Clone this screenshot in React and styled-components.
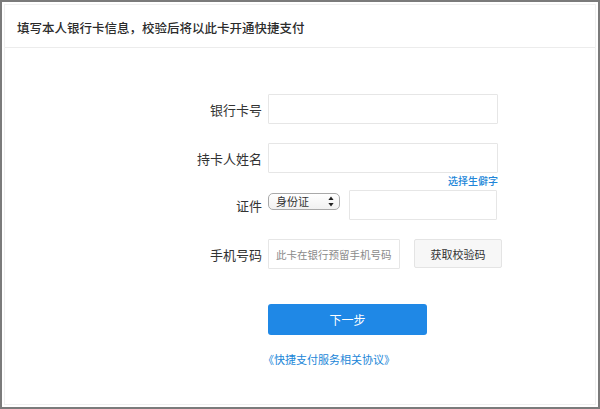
import styled, { createGlobalStyle } from "styled-components";

const GlobalStyle = createGlobalStyle`
  html, body {
    margin: 0;
    padding: 0;
    background: #ffffff;
  }
  * {
    box-sizing: border-box;
  }
`;

const FONT = `"Noto Sans CJK SC", "Noto Sans", sans-serif`;
const BLUE = "#2186d8";

const Frame = styled.div`
  width: 600px;
  height: 409px;
  border: 2px solid #7b7b7b;
  padding: 2px;
  background: #fff;
  font-family: ${FONT};
  color: #333;
`;

const Panel = styled.div`
  height: 100%;
  border: 1px solid #f0f0f0;
  display: flex;
  flex-direction: column;
`;

const Header = styled.div`
  height: 43px;
  border-bottom: 1px solid #ececec;
  display: flex;
  align-items: center;
  padding: 2px 12px 0;
  font-size: 12.5px;
  font-weight: 500;
  color: #2b2b2b;
`;

const Form = styled.div`
  display: grid;
  grid-template-columns: 90px 240px;
  column-gap: 6px;
  align-items: center;
  margin-left: 167px;
  padding-top: 46px;
`;

const Label = styled.div`
  text-align: right;
  font-size: 13px;
  color: #333;
  margin-top: ${({ $top }) => $top || 0}px;
`;

const Field = styled.div`
  display: flex;
  align-items: flex-start;
  margin-top: ${({ $top }) => $top || 0}px;
`;

const Input = styled.input`
  display: block;
  flex-shrink: 0;
  width: ${({ $w }) => $w || 230}px;
  height: 30px;
  border: 1px solid #e6e6e6;
  border-radius: 1px;
  background: #fff;
  padding: 0 2px 0 7px;
  font-family: ${FONT};
  font-size: 10.5px;
  color: #333;
  outline: none;

  &::placeholder {
    color: #8a8a8a;
  }
`;

const SelectWrap = styled.div`
  position: relative;
  width: 72px;
  height: 17px;
  margin: 3px 9px 0 0;
  flex-shrink: 0;
`;

const Select = styled.select`
  display: block;
  appearance: none;
  width: 100%;
  height: 100%;
  border: 1px solid #a9a9a9;
  border-radius: 5px;
  background: linear-gradient(#ffffff, #f1f1f1);
  padding: 0 0 0 7px;
  font-family: ${FONT};
  font-size: 11px;
  color: #333;
  line-height: 15px;
  outline: none;
`;

const Arrows = styled.svg`
  position: absolute;
  right: 6px;
  top: 3px;
  pointer-events: none;
`;

const LinkRow = styled.div`
  grid-column: 2;
  width: 230px;
  text-align: right;
  font-size: 10px;
  font-weight: 500;
  color: ${BLUE};
  margin-top: 1px;
  line-height: 14px;
`;

const CodeButton = styled.button`
  width: 88px;
  height: 29px;
  margin-left: 14px;
  border: 1px solid #e4e4e4;
  border-radius: 2px;
  background: #f7f7f7;
  font-family: ${FONT};
  font-size: 11px;
  color: #333;
  padding: 0;
  flex-shrink: 0;
`;

const Actions = styled.div`
  display: flex;
  flex-direction: column;
  align-items: flex-start;
  margin-left: 263px;
  margin-top: 35px;
`;

const NextButton = styled.button`
  width: 159px;
  height: 31px;
  border: none;
  border-radius: 3px;
  background: #1f88e6;
  color: #fff;
  font-family: ${FONT};
  font-size: 12px;
  padding: 0;
`;

const Agreement = styled.a`
  margin: 16px 0 0 -5px;
  font-size: 11px;
  color: ${BLUE};
  text-decoration: none;
  white-space: nowrap;
`;

export default function App() {
  return (
    <>
      <GlobalStyle />
      <Frame>
        <Panel>
          <Header>填写本人银行卡信息，校验后将以此卡开通快捷支付</Header>

          <Form>
            <Label>银行卡号</Label>
            <Field>
              <Input />
            </Field>

            <Label $top={19}>持卡人姓名</Label>
            <Field $top={19}>
              <Input />
            </Field>

            <LinkRow>选择生僻字</LinkRow>

            <Label $top={2}>证件</Label>
            <Field $top={2}>
              <SelectWrap>
                <Select defaultValue="id">
                  <option value="id">身份证</option>
                </Select>
                <Arrows width="6" height="11" viewBox="0 0 6 11">
                  <path d="M3 0.5 L5.6 4 L0.4 4 Z" fill="#222" />
                  <path d="M3 10.5 L5.6 7 L0.4 7 Z" fill="#222" />
                </Arrows>
              </SelectWrap>
              <Input $w={148} />
            </Field>

            <Label $top={19}>手机号码</Label>
            <Field $top={19}>
              <Input $w={132} placeholder="此卡在银行预留手机号码" />
              <CodeButton>获取校验码</CodeButton>
            </Field>
          </Form>

          <Actions>
            <NextButton>下一步</NextButton>
            <Agreement href="#">《快捷支付服务相关协议》</Agreement>
          </Actions>
        </Panel>
      </Frame>
    </>
  );
}
